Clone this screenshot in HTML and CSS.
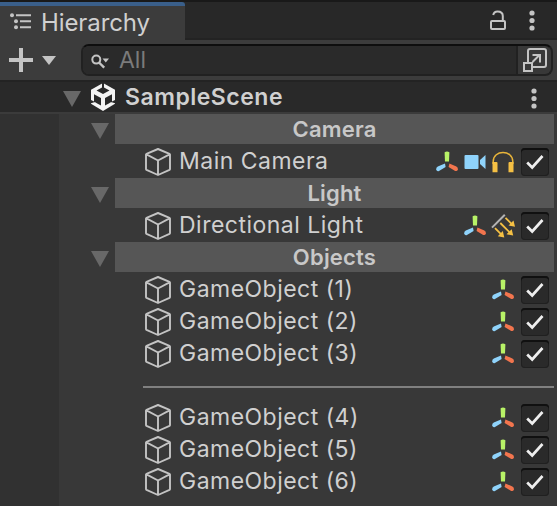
FILE: index.html
```html
<!DOCTYPE html>
<html lang="en">
<head>
<meta charset="utf-8">
<title>Hierarchy</title>
<link rel="stylesheet" href="styles.css">
</head>
<body>
<svg class="defs" width="0" height="0">
  <symbol id="cube" viewBox="0 0 28 30"><path d="M14 2 L25.5 6.8 Q26 7 26 7.6 V22 Q26 22.6 25.5 22.9 L14 28 L2.5 22.9 Q2 22.6 2 22 V7.6 Q2 7 2.5 6.8 Z M2.5 7.4 L14 13.5 L25.5 7.4 M14 13.5 V28" fill="none" stroke="#c4c4c4" stroke-width="1.9" stroke-linejoin="round"/></symbol>
  <symbol id="axes" viewBox="0 0 24 24"><path d="M9.6 2.2 Q12 .6 14.4 2.2 L14 11.5 H10 Z" fill="#b8f267"/><path d="M10 13.4 L10.6 16.9 L4 21 Q1.8 21.8 1.2 19.6 Q.9 17.5 2.8 16.4 Z" fill="#8fd3fb"/><path d="M14.4 13.4 L13.6 16.9 L20.2 20.9 Q22.2 21.7 22.9 19.5 Q23.2 17.6 21.4 16.5 Z" fill="#f2754e"/></symbol>
  <symbol id="camera" viewBox="0 0 24 24"><rect x="1.5" y="5" width="14" height="14" rx="1" fill="#8fd3fb"/><path d="M17 10 L22.5 5 V19 L17 14 Z" fill="#8fd3fb"/></symbol>
  <symbol id="audio" viewBox="0 0 24 24"><path d="M2.2 14 V11.5 C2.2 -.5 21.8 -.5 21.8 11.5 V14" fill="none" stroke="#e9b53a" stroke-width="1.5"/><path d="M1.5 12 H5.5 Q6.5 12 6.5 13 V22.3 H1.5 Z M22.5 12 H18.5 Q17.5 12 17.5 13 V22.3 H22.5 Z" fill="#f5c044"/></symbol>
  <symbol id="sun" viewBox="0 0 24 24"><path d="M1 13.6 L13.8 .8" stroke="#b4b4b4" stroke-width="2"/><g stroke="#f5c044" stroke-width="1.8"><path d="M14.5 3.8 L20.5 9.8 M9.3 9 L18.5 18.2 M4 14.2 L10 20.2"/></g><path d="M24 12.8 L17.5 11.5 L22.5 6.5 Z M22.2 21.6 L15.5 20.2 L20.7 15.2 Z M13.3 23.6 L6.8 22.2 L11.8 17 Z" fill="#f5c044"/></symbol>
  <symbol id="check" viewBox="0 0 28 28"><path d="M6.2 14.5 L11.2 19.5 L21.5 8" fill="none" stroke="#eee" stroke-width="2.7"/></symbol>
  <symbol id="fold" viewBox="0 0 18 16"><path d="M0 0 H18 L9 16 Z" fill="#686868"/></symbol>
  <symbol id="dots" viewBox="0 0 6 22"><g fill="#c4c4c4"><circle cx="3" cy="3" r="2.6"/><circle cx="3" cy="10.5" r="2.6"/><circle cx="3" cy="18" r="2.6"/></g></symbol>
</svg>
<div class="panel">
  <header class="tabs">
    <div class="tab">
      <svg class="list" width="22" height="18"><g fill="#c4c4c4"><circle cx="2" cy="2.2" r="2"/><circle cx="6" cy="8.2" r="2"/><circle cx="6" cy="14.2" r="2"/></g><path d="M6 2.2 H21 M10 8.2 H21 M10 14.2 H21" stroke="#c4c4c4" stroke-width="2"/></svg>
      <span class="tab-name">Hierarchy</span>
    </div>
    <svg class="lock" width="18" height="22"><rect x="2" y="11" width="14" height="8" rx="1" fill="none" stroke="#c4c4c4" stroke-width="2"/><path d="M4.2 5 Q5 1.5 8.5 1.5 Q13.8 1.5 13.8 6 V11" fill="none" stroke="#c4c4c4" stroke-width="2"/></svg>
    <svg class="tab-dots" width="6" height="22"><use href="#dots"/></svg>
  </header>
  <div class="toolbar">
    <svg class="plus" width="24" height="24"><path d="M12 0 V24 M0 12 H24" stroke="#c4c4c4" stroke-width="4"/></svg>
    <svg class="drop" width="14" height="9"><path d="M0 0 H14 L7 9 Z" fill="#c4c4c4"/></svg>
    <div class="search">
      <div class="field">
        <svg width="20" height="16"><circle cx="5.3" cy="5.6" r="4" fill="none" stroke="#c4c4c4" stroke-width="2"/><path d="M8 8.5 L13.2 13.7" stroke="#c4c4c4" stroke-width="2.4"/><path d="M11.5 4.6 H18 L14.8 8.4 Z" fill="#c4c4c4"/></svg>
        <span class="hint">All</span>
      </div>
      <svg class="expand" width="26" height="26"><rect x="6" y="2" width="18" height="18" rx="2" fill="none" stroke="#c4c4c4" stroke-width="2"/><rect x="2" y="16" width="8" height="8" fill="#383838" stroke="#c4c4c4" stroke-width="2"/><path d="M10.5 15 L17.5 8 M10.5 8 H18 V15.5" fill="none" stroke="#c4c4c4" stroke-width="2"/></svg>
    </div>
  </div>
  <div class="scene">
    <svg class="fold" width="18" height="16"><use href="#fold"/></svg>
    <svg class="unity" width="24" height="28" viewBox="0 0 24 28"><path d="M12 0 L24 6.8 V20.8 L12 28 L0 20.8 V6.8 Z" fill="#f4f4f4"/><path d="M11 0 H13 V4.5 L18.5 7.6 L12 11 L5.5 7.6 L11 4.5 Z M3 11.3 L10 15 V22.5 L6.2 20.4 L3 18.4 Z M21 11.3 L14 15 V22.5 L17.8 20.4 L21 18.4 Z M0 17 L4 19 L0 20.2 Z M24 17 L20 19 L24 20.2 Z" fill="#292929"/></svg>
    <span class="scene-name">SampleScene</span>
    <svg class="scene-dots" width="6" height="22"><use href="#dots"/></svg>
  </div>
  <main class="tree">
    <div class="row group"><svg class="fold" width="18" height="16"><use href="#fold"/></svg><span class="bar">Camera</span></div>
    <div class="row"><svg class="cube"><use href="#cube"/></svg><span class="name">Main Camera</span><svg class="icon"><use href="#axes"/></svg><svg class="icon"><use href="#camera"/></svg><svg class="icon"><use href="#audio"/></svg><svg class="box"><use href="#check"/></svg></div>
    <div class="row group"><svg class="fold" width="18" height="16"><use href="#fold"/></svg><span class="bar">Light</span></div>
    <div class="row"><svg class="cube"><use href="#cube"/></svg><span class="name">Directional Light</span><svg class="icon"><use href="#axes"/></svg><svg class="icon"><use href="#sun"/></svg><svg class="box"><use href="#check"/></svg></div>
    <div class="row group"><svg class="fold" width="18" height="16"><use href="#fold"/></svg><span class="bar">Objects</span></div>
    <div class="row"><svg class="cube"><use href="#cube"/></svg><span class="name">GameObject (1)</span><svg class="icon"><use href="#axes"/></svg><svg class="box"><use href="#check"/></svg></div>
    <div class="row"><svg class="cube"><use href="#cube"/></svg><span class="name">GameObject (2)</span><svg class="icon"><use href="#axes"/></svg><svg class="box"><use href="#check"/></svg></div>
    <div class="row"><svg class="cube"><use href="#cube"/></svg><span class="name">GameObject (3)</span><svg class="icon"><use href="#axes"/></svg><svg class="box"><use href="#check"/></svg></div>
    <div class="row separator"><span class="line"></span></div>
    <div class="row"><svg class="cube"><use href="#cube"/></svg><span class="name">GameObject (4)</span><svg class="icon"><use href="#axes"/></svg><svg class="box"><use href="#check"/></svg></div>
    <div class="row"><svg class="cube"><use href="#cube"/></svg><span class="name">GameObject (5)</span><svg class="icon"><use href="#axes"/></svg><svg class="box"><use href="#check"/></svg></div>
    <div class="row"><svg class="cube"><use href="#cube"/></svg><span class="name">GameObject (6)</span><svg class="icon"><use href="#axes"/></svg><svg class="box"><use href="#check"/></svg></div>
  </main>
</div>
</body>
</html>
```
FILE: styles.css
```css
* { box-sizing: border-box; }
body { margin: 0; background: #383838; font-family: Inter, "Liberation Sans", sans-serif; color: #d0d0d0; overflow: hidden; }
svg { flex: none; display: block; }
.defs { position: absolute; }
.panel { width: 557px; height: 506px; display: flex; flex-direction: column; overflow: hidden; }
.tabs { height: 40px; flex: none; display: flex; background: #282828; border-top: 2px solid #191919; box-shadow: inset 0 -2px #232323; }
.tab { width: 185px; height: 38px; display: flex; background: #3c3c3c; border-top: 4px solid #3a5f8a; border-top-right-radius: 3px; padding-left: 10px; }
.list { margin-top: 7px; }
.tab-name { margin-left: 9px; font-size: 24px; line-height: 34px; letter-spacing: -.1px; }
.lock { margin: 8px 0 0 304px; }
.tab-dots { margin: 8px 0 0 22px; }
.toolbar { height: 42px; flex: none; display: flex; background: #3c3c3c; border-bottom: 2px solid #232323; }
.plus { margin: 8px 0 0 9px; }
.drop { margin: 16px 0 0 9px; }
.search { display: flex; width: 472px; height: 32px; margin: 4px 0 0 25px; border: 2px solid #212121; border-top-color: #0e0e0e; border-radius: 8px; background: #383838; overflow: hidden; }
.field { width: 435px; display: flex; background: #2a2a2a; border-right: 2px solid #212121; padding: 8px 0 0 8px; }
.hint { margin-left: 8px; margin-top: -8px; font-size: 23px; line-height: 28px; color: #7b7b7b; }
.expand { margin: 1px 0 0 4px; }
.scene { height: 32px; flex: none; display: flex; background: #292929; border-bottom: 2px solid #3b3b3b; padding-left: 63px; }
.scene .fold { margin-top: 9px; }
.unity { margin: 1px 0 0 10px; }
.scene-name { margin-left: 10px; width: 160px; font-size: 23px; font-weight: 600; line-height: 30px; letter-spacing: .5px; white-space: nowrap; }
.scene-dots { margin: 6px 0 0 246px; }
.tree { flex: 1; background: linear-gradient(to right, #313131 59px, #383838 59px); }
.row { height: 32px; display: flex; align-items: center; padding: 0 8px 0 144px; }
.group { align-items: flex-start; padding: 0 3px 0 91px; }
.group .fold { margin-top: 9px; }
.bar { flex: 1; height: 30px; margin-left: 6px; background: #565656; color: #c8c8c8; font-size: 22px; font-weight: 600; line-height: 31px; text-align: center; letter-spacing: .2px; }
.cube { width: 28px; height: 30px; }
.name { flex: 1; margin: -2px 0 0 7px; font-size: 23px; line-height: 30px; letter-spacing: .48px; white-space: nowrap; }
.icon { width: 24px; height: 24px; margin-right: 4px; }
.box { width: 28px; height: 28px; margin-left: 2px; background: #2a2a2a; border-radius: 4px; box-shadow: inset 0 2px #101010, inset 0 0 0 1px #202020; }
.separator { padding: 1px 3px 0 143px; }
.line { flex: 1; height: 2px; background: #808080; }
```
